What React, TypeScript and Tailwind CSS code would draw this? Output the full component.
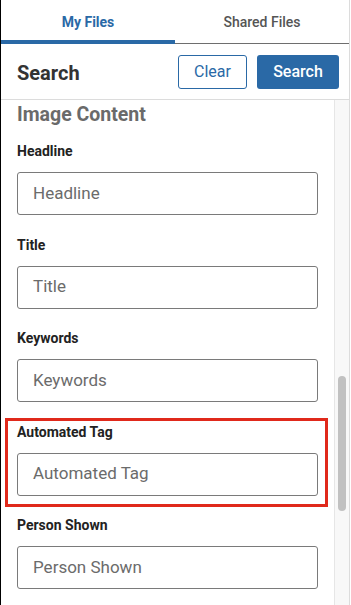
import React from "react";

const fields = ["Headline", "Title", "Keywords", "Automated Tag", "Person Shown"];

function Field({ label, highlight }: { label: string; highlight?: boolean }) {
  return (
    <div className="relative flex flex-col">
      {highlight && (
        <div className="pointer-events-none absolute left-[-12px] right-[-10px] top-[-6px] bottom-[-11px] border-[3px] border-[#e0291b]" />
      )}
      <div className="h-[16px] text-[14px] leading-[16px] font-bold text-[#222]">{label}</div>
      <div className="mt-[13px] flex h-[43px] items-center rounded-[3px] border border-[#7a7a7a] bg-white pl-[15px] text-[17px] text-[#6b6b6b]">
        {label}
      </div>
    </div>
  );
}

export default function App() {
  return (
    <div
      className="flex h-[605px] w-[350px] flex-col overflow-hidden border-l border-l-black border-r border-r-[#dcdcdc] bg-white"
      style={{ fontFamily: "Roboto, 'Liberation Sans', Arial, sans-serif" }}
    >
      {/* Tabs */}
      <div className="flex h-[44px] border-b border-[#6e6e6e]">
        <div className="flex w-[174px] items-center justify-center border-b-[4px] border-[#2a69a6] pt-[5px] text-[14px] font-bold text-[#2a69a6] -mb-px">
          My Files
        </div>
        <div className="flex flex-1 items-center justify-center pt-[1px] text-[14px] font-medium text-[#555]">
          Shared Files
        </div>
      </div>
      {/* Header */}
      <div className="flex h-[56px] items-center border-b border-[#dcdcdc] pl-[16px] pr-[10px]">
        <div className="flex-1 pt-[2px] text-[20px] font-bold text-[#333]">Search</div>
        <button className="flex h-[34px] w-[69px] items-center justify-center rounded-[3px] border border-[#2a69a6] bg-white text-[16px] text-[#2a69a6]">
          Clear
        </button>
        <button className="ml-[10px] flex h-[34px] w-[82px] items-center justify-center rounded-[3px] bg-[#2a69a6] text-[16px] font-medium text-white">
          Search
        </button>
      </div>
      {/* Scroll area */}
      <div className="flex min-h-0 flex-1">
        <div className="flex-1 overflow-hidden px-[16px] pt-[4px]">
          <div className="h-[22px] text-[19.5px] leading-[22px] font-bold text-[#6a6a6a]">Image Content</div>
          <div className="mt-[17px] flex flex-col gap-[21.5px]">
            {fields.map((f) => (
              <Field key={f} label={f} highlight={f === "Automated Tag"} />
            ))}
          </div>
        </div>
        <div className="flex w-[15px] justify-center border-l border-[#e6e6e6] bg-[#f8f8f8]">
          <div className="mt-[276px] h-[135px] w-[8px] rounded-full bg-[#c1c1c1]" />
        </div>
      </div>
    </div>
  );
}
